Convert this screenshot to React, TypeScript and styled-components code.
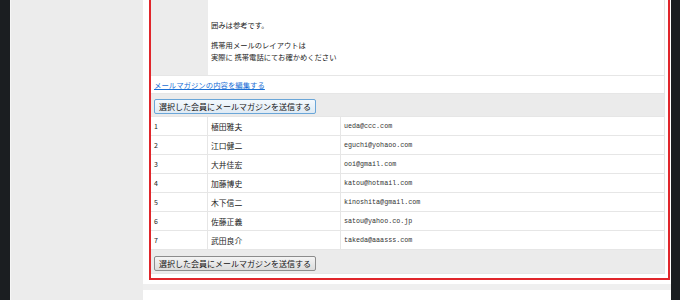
import styled, { createGlobalStyle } from 'styled-components'

const GlobalStyle = createGlobalStyle`
  html, body {
    margin: 0;
    padding: 0;
    background: #1b1e21;
  }
  body {
    font-family: 'Noto Sans CJK JP', 'Noto Sans', sans-serif;
    color: #222;
  }
`

type Member = { id: number; name: string; email: string }

const members: Member[] = [
  { id: 1, name: '植田雅夫', email: 'ueda@ccc.com' },
  { id: 2, name: '江口健二', email: 'eguchi@yohaoo.com' },
  { id: 3, name: '大井佳宏', email: 'ooi@gmail.com' },
  { id: 4, name: '加藤博史', email: 'katou@hotmail.com' },
  { id: 5, name: '木下信二', email: 'kinoshita@gmail.com' },
  { id: 6, name: '佐藤正義', email: 'satou@yahoo.co.jp' },
  { id: 7, name: '武田良介', email: 'takeda@aaasss.com' },
]

const Page = styled.div`
  display: flex;
  height: 300px;
  overflow: hidden;
  padding: 0 9px 0 10px;
  background: #1b1e21;
`

const Sidebar = styled.aside`
  width: 132px;
  flex: none;
  border-left: 1px solid #f6f6f6;
  background: #ececec;
`

const Main = styled.main`
  flex: 1;
  display: flex;
  flex-direction: column;
  gap: 6px;
  background: #efefef;
`

const Panel = styled.section`
  background: #fff;
  padding: 0 1px 4px 6px;
`

const EmptyPanel = styled.section`
  flex: 1;
  background: #fff;
`

const Frame = styled.div`
  border: 2px solid #e0262b;
  border-top: none;
  padding: 0 3px 4px 0;
`

const Row = styled.div<{ $height: number; $shade?: boolean }>`
  display: grid;
  grid-template-columns: 57px 133px 1fr;
  height: ${(p) => p.$height}px;
  box-sizing: border-box;
  border-bottom: 1px solid #e6e6e6;
  background: ${(p) => (p.$shade ? '#ebebeb' : '#fff')};
`

const Cell = styled.div<{ $span?: number }>`
  grid-column: span ${(p) => p.$span ?? 1};
  display: flex;
  align-items: center;
  padding-left: 3px;
  border-right: 1px solid #e6e6e6;
  min-width: 0;
`

const NoteLabel = styled.div`
  background: #ececec;
`

const Note = styled.div`
  grid-column: span 2;
  padding: 19px 0 0 3px;
  border-right: 1px solid #e6e6e6;
  font-size: 7.3px;
  line-height: 12px;

  p {
    margin: 0 0 8px;
  }
`

const ActionCell = styled.div<{ $top: number }>`
  grid-column: span 3;
  display: flex;
  align-items: flex-start;
  padding: ${(p) => p.$top}px 0 0 3px;
  border-right: 1px solid #e6e6e6;
`

const EditLink = styled.a`
  font-size: 7.4px;
  color: #1a6fd6;
  text-decoration: underline;
`

const SendButton = styled.button<{ $focused?: boolean }>`
  display: block;
  height: 15px;
  padding: 0 4px;
  margin: 0;
  font-family: inherit;
  font-size: 8px;
  line-height: 13px;
  color: #111;
  border-radius: 2px;
  border: 1px solid ${(p) => (p.$focused ? '#6aa6d8' : '#8c8c8c')};
  background: ${(p) =>
    p.$focused
      ? 'linear-gradient(#f4f9fd, #dfeaf4)'
      : 'linear-gradient(#f4f4f4, #dcdcdc)'};
`

const Num = styled.span`
  font-size: 7px;
`

const Name = styled.span`
  font-size: 7.8px;
`

const Email = styled.span`
  font-family: 'Liberation Mono', monospace;
  font-size: 6.7px;
  color: #333;
`

export default function App() {
  return (
    <>
      <GlobalStyle />
      <Page>
        <Sidebar />
        <Main>
          <Panel>
            <Frame>
              <Row $height={76}>
                <NoteLabel />
                <Note>
                  <p>囲みは参考です。</p>
                  <p>
                    携帯用メールのレイアウトは
                    <br />
                    実際に 携帯電話にてお確かめください
                  </p>
                </Note>
              </Row>
              <Row $height={18}>
                <Cell $span={3}>
                  <EditLink href="#">メールマガジンの内容を編集する</EditLink>
                </Cell>
              </Row>
              <Row $height={23} $shade>
                <ActionCell $top={5}>
                  <SendButton $focused>選択した会員にメールマガジンを送信する</SendButton>
                </ActionCell>
              </Row>
              {members.map(({ id, name, email }) => (
                <Row key={id} $height={19}>
                  <Cell>
                    <Num>{id}</Num>
                  </Cell>
                  <Cell>
                    <Name>{name}</Name>
                  </Cell>
                  <Cell>
                    <Email>{email}</Email>
                  </Cell>
                </Row>
              ))}
              <Row $height={24} $shade>
                <ActionCell $top={6}>
                  <SendButton>選択した会員にメールマガジンを送信する</SendButton>
                </ActionCell>
              </Row>
            </Frame>
          </Panel>
          <EmptyPanel />
        </Main>
      </Page>
    </>
  )
}
